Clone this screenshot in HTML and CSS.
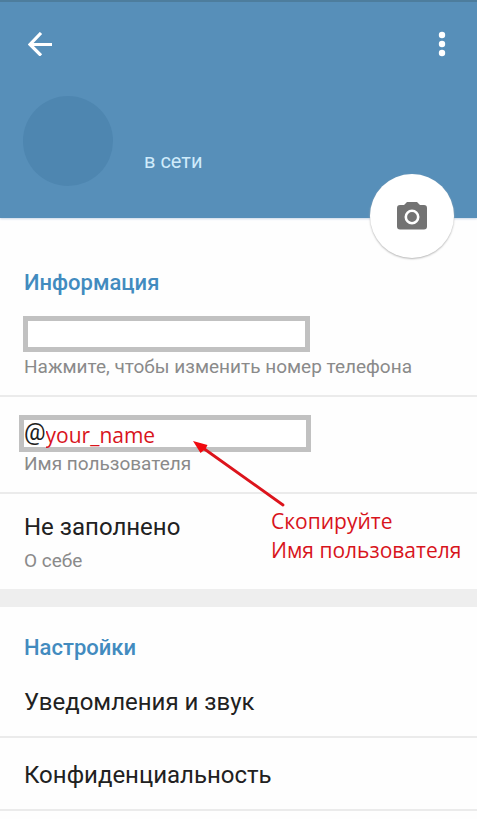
FILE: index.html
```html
<!DOCTYPE html>
<html lang="ru">
<head>
<meta charset="utf-8">
<meta name="viewport" content="width=device-width, initial-scale=1">
<title>Настройки</title>
<link rel="stylesheet" href="styles.css">
</head>
<body>
<header class="header">
  <div class="bar">
    <button class="icon-button" type="button" aria-label="Назад">
      <svg width="24" height="24" viewBox="0 0 24 24" fill="none" stroke="currentColor" stroke-width="3.200"><path d="M24 12.500H2M13 1L2 12.500l11 11"/></svg>
    </button>
    <button class="icon-button menu" type="button" aria-label="Меню">
      <svg width="8" height="26" viewBox="0 0 8 26" fill="currentColor"><circle cx="4" cy="4" r="3.200"/><circle cx="4" cy="13" r="3.200"/><circle cx="4" cy="22" r="3.200"/></svg>
    </button>
  </div>
  <div class="profile">
    <div class="avatar"></div>
    <p class="status">в сети</p>
  </div>
  <button class="camera" type="button" aria-label="Изменить фото">
    <svg width="30" height="28" viewBox="0 0 30 28"><path fill="#737373" d="M10 0h10l3 3h4a3 3 0 0 1 3 3v18.500a3 3 0 0 1-3 3H3a3 3 0 0 1-3-3V6a3 3 0 0 1 3-3h4z"/><circle cx="15" cy="15" r="6.200" fill="none" stroke="#fff" stroke-width="2.600"/></svg>
  </button>
</header>
<main>
  <section class="info">
    <h2 class="heading">Информация</h2>
    <div class="row">
      <input class="box" id="phone" type="tel">
      <label class="caption" for="phone">Нажмите, чтобы изменить номер телефона</label>
    </div>
    <div class="row user-row">
      <div class="box user-box">
        <span class="at">@</span>
        <input class="user-input" id="username" type="text" value="your_name">
      </div>
      <label class="caption" for="username">Имя пользователя</label>
      <div class="hint">
        <svg class="arrow" width="92" height="66" viewBox="0 0 92 66"><path d="M90 64L10 7" stroke="#dc141c" stroke-width="2.800" stroke-linecap="round"/><path d="M0 0L14.500 4 12.500 8 7.500 12z" fill="#f00a0f"/></svg>
        <p class="hint-text">Скопируйте<br>Имя пользователя</p>
      </div>
    </div>
    <div class="row about">
      <p class="title">Не заполнено</p>
      <p class="caption">О себе</p>
    </div>
  </section>
  <section class="settings">
    <h2 class="heading">Настройки</h2>
    <a class="link" href="#notifications">Уведомления и звук</a>
    <a class="link" href="#privacy">Конфиденциальность</a>
  </section>
</main>
</body>
</html>
```
FILE: styles.css
```css
* {
  box-sizing: border-box;
}

body {
  margin: 0;
  background: #fefefe;
  color: #212121;
  font-family: Roboto, "Noto Sans", sans-serif;
}

h2,
p {
  margin: 0;
}

button {
  padding: 0;
  border: 0;
  background: none;
  cursor: pointer;
}

svg {
  display: block;
}

.header {
  position: relative;
  padding: 20px 23px 32px;
  border-top: 2px solid #4d7d9d;
  background: #578fb9;
  box-shadow: 0 1px 2px #c9d6e6;
}

.bar {
  display: flex;
  justify-content: space-between;
}

.icon-button {
  display: flex;
  align-items: center;
  justify-content: center;
  width: 34px;
  height: 44px;
  color: #fff;
}

.menu {
  width: 24px;
}

.profile {
  display: flex;
  align-items: flex-end;
  gap: 31px;
  margin-top: 30px;
}

.avatar {
  width: 90px;
  height: 90px;
  border-radius: 50%;
  background: #4e86b0;
}

.status {
  padding-bottom: 13px;
  color: #cfebfb;
  font-size: 20px;
  line-height: 24px;
}

.camera {
  position: absolute;
  right: 23px;
  bottom: -40px;
  display: flex;
  align-items: center;
  justify-content: center;
  width: 84px;
  height: 84px;
  border-radius: 50%;
  background: #fff;
  box-shadow: 0 1px 2px #b5b5b5;
}

.info {
  padding-top: 50px;
}

.heading {
  padding: 0 24px;
  color: #428bbf;
  font-size: 22px;
  font-weight: 500;
  line-height: 30px;
}

.row {
  display: flex;
  flex-direction: column;
  align-items: flex-start;
  padding: 18px 24px 16px;
  border-bottom: 2px solid #ebebeb;
}

.box {
  width: 67%;
  height: 36px;
  margin-left: -1px;
  border: 5px solid #c1c1c1;
  border-radius: 0;
  background: #fff;
}

.caption {
  color: #8a8a8a;
  font-size: 19px;
  line-height: 24px;
}

#phone {
  margin-bottom: 3px;
}

.user-row {
  position: relative;
}

.user-box {
  display: flex;
  align-items: flex-start;
  height: 37px;
  width: 68%;
  margin-left: -5px;
}

.at {
  font-size: 24px;
  line-height: 24px;
}

.user-input {
  flex: 1;
  min-width: 0;
  height: 30px;
  padding: 0;
  border: 0;
  background: none;
  color: #d8141c;
  font-family: "Open Sans", sans-serif;
  font-size: 21px;
}

.hint {
  position: absolute;
  top: 44px;
  left: 193px;
  color: #d8141c;
  pointer-events: none;
}

.hint-text {
  padding-left: 78px;
  font-family: "Open Sans", sans-serif;
  font-size: 21px;
  line-height: 29px;
  white-space: nowrap;
}

.about {
  gap: 7px;
  border-bottom: 0;
}

.title,
.link {
  color: #212121;
  font-size: 24px;
  line-height: 30px;
}

.settings {
  padding-top: 26px;
  border-top: 18px solid #eee;
}

.settings .heading {
  margin-bottom: 2px;
}

.link {
  display: block;
  padding: 22px 24px 19px;
  border-bottom: 2px solid #ebebeb;
  text-decoration: none;
}
```
